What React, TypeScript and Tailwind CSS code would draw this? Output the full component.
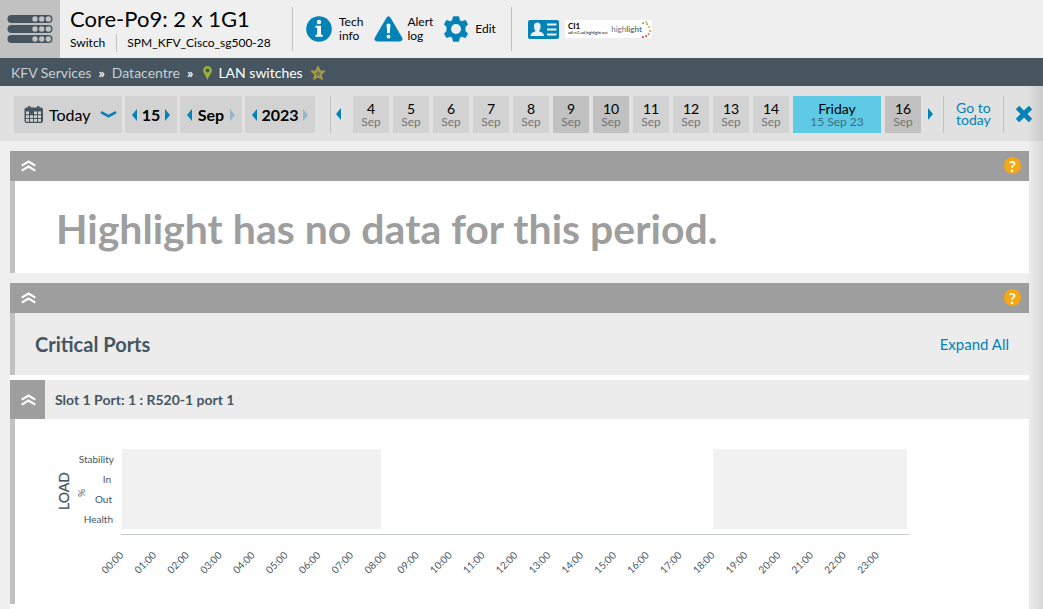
import { useState } from 'react';
import clsx from 'clsx';

interface Day {
  num: string;
  label: string;
  weekend?: boolean;
  selected?: boolean;
}

const days: Day[] = [
  { num: '4', label: 'Sep' },
  { num: '5', label: 'Sep' },
  { num: '6', label: 'Sep' },
  { num: '7', label: 'Sep' },
  { num: '8', label: 'Sep' },
  { num: '9', label: 'Sep', weekend: true },
  { num: '10', label: 'Sep', weekend: true },
  { num: '11', label: 'Sep' },
  { num: '12', label: 'Sep' },
  { num: '13', label: 'Sep' },
  { num: '14', label: 'Sep' },
  { num: 'Friday', label: '15 Sep 23', selected: true },
  { num: '16', label: 'Sep', weekend: true },
];

const hours = Array.from({ length: 24 }, (_, i) => `${String(i).padStart(2, '0')}:00`);

function SwitchIcon() {
  return (
    <svg width="46" height="28" viewBox="0 0 46 28">
      {[0, 10, 20].map((y) => (
        <g key={y}>
          <rect x="0.5" y={y} width="45" height="8" rx="4" fill="#46555f" />
          {[28, 34.7, 41.4].map((x) => (
            <circle key={x} cx={x} cy={y + 4} r="2.7" fill="#c1c1c1" />
          ))}
        </g>
      ))}
    </svg>
  );
}

function InfoIcon() {
  return (
    <svg width="26" height="26" viewBox="0 0 26 26">
      <circle cx="13" cy="13" r="12.8" fill="#0282b7" />
      <circle cx="13" cy="6" r="2.2" fill="#fff" />
      <path d="M9.5 9.7h5.5v9h1.7v2.1H9.5v-2.1h1.7v-6.9H9.5z" fill="#fff" />
    </svg>
  );
}

function AlertIcon() {
  return (
    <svg width="29" height="26" viewBox="0 0 29 26">
      <path d="M12.3 1.9q2.2-3.2 4.4 0l11.4 19.5q1.4 3.8-2.4 4.1H3.3q-3.8-.3-2.4-4.1z" fill="#0282b7" />
      <path d="M12.5 9q0-1.5 2-1.5t2 1.5l-.8 8.2h-2.4z" fill="#fff" />
      <circle cx="14.5" cy="20.6" r="1.9" fill="#fff" />
    </svg>
  );
}

function GearIcon() {
  return (
    <svg width="24" height="26" viewBox="0 0 24 26">
      <path
        d="M9.2.6h5.6l.8 3.6 2.2 1.3 3.7-1.3 2.3 4.2-2.6 2.7v3.8l2.6 2.7-2.3 4.2-3.7-1.3-2.2 1.3-.8 3.6H9.2l-.8-3.6-2.2-1.3-3.7 1.3L.2 17.6l2.6-2.7v-3.8L.2 8.4l2.3-4.2 3.7 1.3 2.2-1.3z"
        fill="#0282b7"
        stroke="#0282b7"
        strokeWidth="0.5"
        strokeLinejoin="round"
      />
      <circle cx="12" cy="13" r="5" fill="#efefef" />
    </svg>
  );
}

function CardIcon() {
  return (
    <svg width="31" height="19" viewBox="0 0 31 19">
      <rect width="31" height="19" rx="2" fill="#0282b7" />
      <path
        d="M2.5 16q.3-3.500 4-4.200l1.100-.8Q5.900 9.300 5.900 6.200 6.100 2.600 9.300 2.600t3.400 3.600q0 3.100-1.700 4.800l1.100.8q3.700.7 4 4.200z"
        fill="#efefef"
      />
      <path d="M19 4.500h9.500M19 9.500h9.500M19 14.500h9.500" stroke="#efefef" strokeWidth="2" />
    </svg>
  );
}

function HighlightDots() {
  const dots = [
    [1, 2, '#8fa83c'],
    [5, 3, '#a9b83c'],
    [7, 6, '#d3b83a'],
    [8, 10, '#ee9a3a'],
    [6.5, 13, '#e8743c'],
    [4, 15, '#d94e4a'],
    [0.8, 16, '#d8445c'],
    [4, 0.8, '#c9be6a'],
  ] as const;
  return (
    <svg width="9" height="17" viewBox="0 0 9 17">
      {dots.map(([x, y, fill], i) => (
        <rect key={i} x={x - 0.8} y={y - 0.8} width="1.8" height="1.8" fill={fill} />
      ))}
    </svg>
  );
}

function CalendarIcon() {
  return (
    <svg width="20" height="17" viewBox="0 0 20 17">
      <rect x="0.5" y="1.5" width="18.500" height="15.500" rx="2" fill="#46555f" />
      <rect x="4" y="0" width="2.5" height="4" rx="1" fill="#46555f" />
      <rect x="13" y="0" width="2.5" height="4" rx="1" fill="#46555f" />
      {[5.5, 9.3, 13].map((y, row) =>
        [2, 6, 10, 14].map((x, col) =>
          row === 0 && col === 1 ? null : (
            <rect key={`${x}-${y}`} x={x} y={y} width="3" height="2.7" fill="#d2d2d2" />
          ),
        ),
      )}
    </svg>
  );
}

function Triangle({ dir, faded }: { dir: 'left' | 'right'; faded?: boolean }) {
  return (
    <svg width="5" height="12" viewBox="0 0 5 12" className="shrink-0">
      <path d={dir === 'left' ? 'M5 0v12L0 6z' : 'M0 0v12L5 6z'} fill={faded ? '#8fb9cb' : '#0282b7'} />
    </svg>
  );
}

function DoubleChevron() {
  return (
    <svg width="15" height="12" viewBox="0 0 15 12" fill="none" stroke="#fff" strokeWidth="2.1">
      <path d="M.7 5.700 7.500 1.500l6.800 4.200M.7 10.700 7.500 6.500l6.800 4.200" />
    </svg>
  );
}

function PanelHeader({ onToggle }: { onToggle: () => void }) {
  return (
    <div className="flex h-[30px] items-center justify-between bg-[#9e9e9e] pr-2 pl-[11px]">
      <button onClick={onToggle} aria-label="Toggle panel">
        <DoubleChevron />
      </button>
      <button
        aria-label="Help"
        className="mb-px flex h-[17px] w-[17px] items-center justify-center rounded-full bg-[#f4a814] text-[15px] leading-4 font-bold text-white"
      >
        ?
      </button>
    </div>
  );
}

interface DateStepperProps {
  value: string;
  width: string;
  nextDisabled?: boolean;
}

function DateStepper({ value, width, nextDisabled }: DateStepperProps) {
  return (
    <div className={clsx('flex h-[37px] items-center justify-between bg-[#d2d2d2] px-[7px] pt-px', width)}>
      <button aria-label={`Before ${value}`}>
        <Triangle dir="left" />
      </button>
      <span className="text-base font-bold">{value}</span>
      <button aria-label={`After ${value}`} disabled={nextDisabled}>
        <Triangle dir="right" faded={nextDisabled} />
      </button>
    </div>
  );
}

function LoadChart() {
  return (
    <svg width="900" height="180" viewBox="0 0 900 180" className="block max-w-full">
      <rect x="107" y="30" width="259" height="80" fill="#f1f1f1" />
      <rect x="698" y="30" width="194" height="80" fill="#f1f1f1" />
      <path d="M106 115.5H894" stroke="#c4c9c9" />
      <g fill="#46555f">
        <text transform="translate(54 91) rotate(-90)" className="text-[14px]" stroke="#46555f" strokeWidth="0.3">
          LOAD
        </text>
        <text transform="translate(70 78) rotate(-90)" className="text-[10px]">
          %
        </text>
        <g textAnchor="end" className="text-[10px]">
          <text x="99" y="44">Stability</text>
          <text x="96" y="64">In</text>
          <text x="97" y="84">Out</text>
          <text x="98" y="104">Health</text>
          {hours.map((hour, i) => (
            <text key={hour} transform={`translate(${109 + i * 32.85} 137) rotate(-45)`}>
              {hour}
            </text>
          ))}
        </g>
      </g>
    </svg>
  );
}

export default function App() {
  const [summaryOpen, setSummaryOpen] = useState(true);
  const [portsOpen, setPortsOpen] = useState(true);
  const [slotOpen, setSlotOpen] = useState(true);

  return (
    <div className="min-h-screen bg-[#efefef] font-['Lato','Carlito',sans-serif] text-black">
      <header className="flex h-[58px] items-center">
        <div className="flex h-full w-[60px] shrink-0 items-center justify-center bg-[#c1c1c1]">
          <SwitchIcon />
        </div>
        <div className="w-[222px] pl-[10px]">
          <h1 className="text-[22px] leading-[25px] whitespace-nowrap">Core-Po9: 2 x 1G1</h1>
          <div className="mt-[3px] flex items-center text-[12px] leading-[18px]">
            <span className="border-r border-[#c1c1c1] pr-[11px]">Switch</span>
            <span className="pl-[10px] whitespace-nowrap">SPM_KFV_Cisco_sg500-28</span>
          </div>
        </div>
        <div className="ml-[10px] flex h-11 items-center gap-[11px] border-x border-[#c1c1c1] pr-[15px] pl-[13px] text-[12px] leading-[14px]">
          <button className="flex items-center gap-[7px] text-left">
            <InfoIcon />
            <span>Tech<br />info</span>
          </button>
          <button className="flex items-center gap-1 text-left">
            <AlertIcon />
            <span>Alert<br />log</span>
          </button>
          <button className="flex items-center gap-[7px]">
            <GearIcon />
            <span>Edit</span>
          </button>
        </div>
        <div className="ml-4 flex items-center gap-[6px]">
          <CardIcon />
          <div className="flex h-[18px] w-[87px] items-center justify-between bg-white pr-px pl-[3px]">
            <div className="text-[8px] leading-[8px] font-bold">
              CI1
              <div className="text-[4px] leading-[6px] font-normal whitespace-nowrap">adi-ci1.ad.highlight.net</div>
            </div>
            <div className="flex items-center text-[8px] text-[#66757f]">
              <span>high<b>light</b></span>
              <HighlightDots />
            </div>
          </div>
        </div>
      </header>

      <nav className="flex h-7 items-center bg-[#46555f] pt-px pl-[11px] text-[14px] text-[#c9ced1]">
        <a href="#services">KFV Services</a>
        <span className="mx-[7px] font-bold text-white">»</span>
        <a href="#datacentre">Datacentre</a>
        <span className="mx-[7px] font-bold text-white">»</span>
        <svg width="9" height="14" viewBox="0 0 9 14" className="mx-[3px]">
          <path
            fillRule="evenodd"
            d="M4.500 0A4.400 4.400 0 0 0 .1 4.500C.1 7 2.500 9 4.500 14 6.500 9 8.900 7 8.900 4.500A4.400 4.400 0 0 0 4.500 0zm0 2.600a1.900 1.900 0 1 1 0 3.800 1.900 1.900 0 0 1 0-3.800z"
            fill="#97b03a"
          />
        </svg>
        <a href="#switches" className="ml-[3px] text-white">LAN switches</a>
        <button aria-label="Favourite" className="ml-[7px]">
          <svg width="16" height="16" viewBox="0 0 16 16">
            <path
              d="M8 1.500l1.900 4.400 4.600.4-3.500 3.100 1.100 4.700L8 11.600l-4.100 2.500L5 9.400 1.500 6.300l4.600-.4z"
              fill="#a39b4c"
              stroke="#a39b4c"
              strokeWidth="1.500"
              strokeLinejoin="round"
            />
            <path d="M8 5.800l.8 1.900 2 .2-1.500 1.300.5 2L8 10.100l-1.800 1.100.5-2L5.200 7.900l2-.2z" fill="#46555f" />
            <circle cx="8" cy="8.700" r="0.9" fill="#a39b4c" />
          </svg>
        </button>
      </nav>

      <div className="relative">
        <div className="flex h-[55px] items-center bg-[#e1e1e1] pt-px pl-[14px]">
          <div className="flex gap-[3px]">
            <button className="flex h-[37px] w-[108px] items-center bg-[#d2d2d2] pt-px pl-[10px]">
              <CalendarIcon />
              <span className="ml-[5px] text-base">Today</span>
              <svg width="17" height="7" viewBox="0 0 17 7" className="ml-[9px]">
                <path d="M1 1.200 8.500 5.200 16 1.200" fill="none" stroke="#0282b7" strokeWidth="2.600" />
              </svg>
            </button>
            <DateStepper value="15" width="w-[52px]" />
            <DateStepper value="Sep" width="w-[62px]" nextDisabled />
            <DateStepper value="2023" width="w-[70px]" nextDisabled />
          </div>
          <div className="ml-[15px] flex h-[37px] items-center border-l border-[#c1c1c1] pl-[5px]">
            <button aria-label="Earlier days">
              <Triangle dir="left" />
            </button>
            <div className="mr-[7px] ml-3 flex gap-1">
              {days.map((day) => (
                <button
                  key={day.num}
                  className={clsx(
                    'flex h-[37px] flex-col items-center justify-center pt-px text-[14px] leading-[13px]',
                    day.selected ? 'w-[88px] bg-[#5ecae5]' : 'w-9',
                    !day.selected && (day.weekend ? 'bg-[#c1c1c1]' : 'bg-[#d2d2d2]'),
                  )}
                >
                  {day.num}
                  <span className={clsx('text-[12px]', day.selected ? 'text-[#3d7180]' : 'text-[#757575]')}>
                    {day.label}
                  </span>
                </button>
              ))}
            </div>
            <button aria-label="Later days">
              <Triangle dir="right" />
            </button>
          </div>
          <button className="ml-[10px] h-[37px] border-x border-[#c1c1c1] px-[12px] text-[14px] leading-3 text-[#0282b7]">
            Go to<br />today
          </button>
          <button aria-label="Close" className="ml-[11px]">
            <svg width="18" height="18" viewBox="0 0 18 18">
              <path d="M2.500 2.500l13 13M15.500 2.500l-13 13" stroke="#0282b7" strokeWidth="4.800" />
            </svg>
          </button>
        </div>

        <main className="pt-[10px] pr-[14px] pl-[10px]">
          <section>
            <PanelHeader onToggle={() => setSummaryOpen(!summaryOpen)} />
            {summaryOpen && (
              <div className="flex h-[92px] items-center border-l-[5px] border-[#c1c1c1] bg-white pt-1 pl-[41px]">
                <p className="text-[41px] leading-[48px] font-bold text-[#9e9e9e]">
                  Highlight has no data for this period.
                </p>
              </div>
            )}
          </section>

          <section className="mt-[10px] bg-white">
            <PanelHeader onToggle={() => setPortsOpen(!portsOpen)} />
            {portsOpen && (
              <>
                <div className="flex h-[62px] items-center justify-between border-l-[5px] border-[#c1c1c1] bg-[#ececec] pr-5 pl-5">
                  <h2 className="text-xl font-bold text-[#46555f]">Critical Ports</h2>
                  <button className="text-[15px] text-[#0282b7]">Expand All</button>
                </div>
                <div className="mt-[5px] flex h-[39px] items-center bg-[#ececec]">
                  <button
                    onClick={() => setSlotOpen(!slotOpen)}
                    aria-label="Toggle port"
                    className="flex h-full w-[35px] items-center bg-[#9e9e9e] pl-[11px]"
                  >
                    <DoubleChevron />
                  </button>
                  <h3 className="ml-[10px] text-[14px] font-bold text-[#46555f]">
                    Slot 1 Port: 1 : R520-1 port 1
                  </h3>
                </div>
                {slotOpen && (
                  <div className="border-l-[5px] border-[#c1c1c1] pb-[5px]">
                    <LoadChart />
                  </div>
                )}
                <div className="h-[5px]" />
              </>
            )}
          </section>
        </main>

        {/* soft shadow down the right edge */}
        <div className="pointer-events-none absolute inset-y-0 right-0 w-4 bg-linear-to-r from-black/0 to-black/10" />
      </div>
    </div>
  );
}
